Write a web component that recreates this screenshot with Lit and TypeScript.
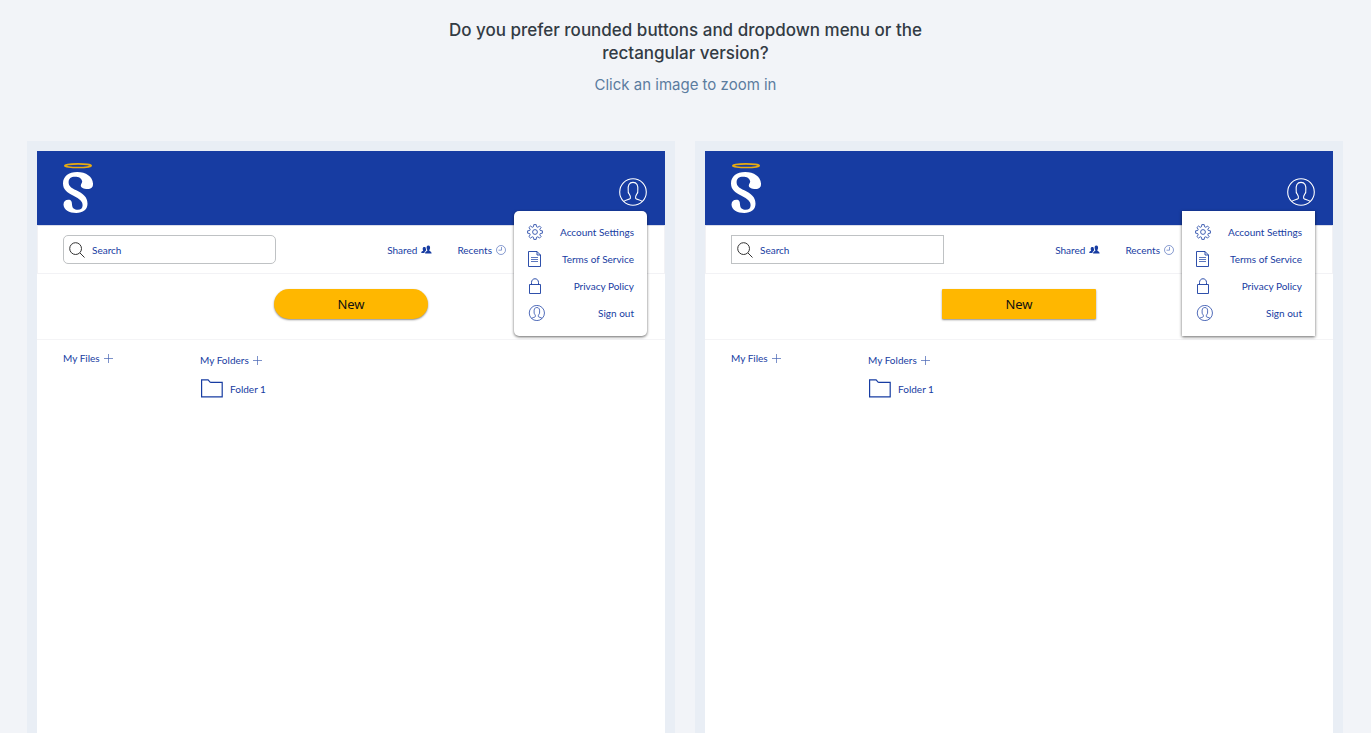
import { LitElement, html, css, svg } from "lit";
import { customElement, property } from "lit/decorators.js";

const person = svg`
  <circle cx="14" cy="14" r="13.3"></circle>
  <path d="M4.8 23.4C6.5 21.8 10.8 21.6 11.4 20.2C11.8 18.6 11.2 17.6 10.4 16.4C9.2 15.4 9 13.6 9.2 12.2C8.8 7.6 10 4.4 14 4.4S19.2 7.6 18.8 12.2C19 13.6 18.8 15.4 17.6 16.4C16.8 17.6 16.2 18.6 16.6 20.2C17.2 21.6 21.5 21.8 23.2 23.4"></path>`;

@customElement("file-mockup")
export class FileMockup extends LitElement {
  @property({ reflect: true }) shape: "rounded" | "square" = "rounded";

  static styles = css`
    :host {
      --blue: #173ca2;
      --radius-small: 0;
      --radius-button: 1px;
      --radius-menu: 0;
      display: block;
      position: relative;
      background: #fff;
      color: var(--blue);
      font: 10px/16px Lato, "Open Sans", sans-serif;
    }
    :host([shape="rounded"]) {
      --radius-small: 5px;
      --radius-button: 15px;
      --radius-menu: 5px;
    }
    svg {
      display: block;
      flex: none;
      fill: none;
      stroke: currentColor;
    }
    a {
      color: inherit;
      text-decoration: none;
    }
    button {
      border: 0;
      padding: 0;
      background: none;
      color: inherit;
      font: inherit;
      cursor: pointer;
    }
    .header {
      display: flex;
      justify-content: space-between;
      align-items: center;
      height: 74px;
      box-sizing: border-box;
      padding: 8px 18px 0 25px;
      background: var(--blue);
      color: #fff;
    }
    .logo {
      margin-top: -8px;
    }
    .toolbar {
      display: flex;
      align-items: center;
      justify-content: space-between;
      padding: 9px 158px 9px 25px;
      border: 1px solid #f2f2f5;
      border-top-color: #d9dcea;
    }
    .search {
      display: flex;
      align-items: center;
      gap: 7px;
      width: 48%;
      height: 29px;
      box-sizing: border-box;
      padding: 0 6px 0 5px;
      border: 1px solid #bfc2c4;
      border-radius: var(--radius-small);
    }
    .search svg {
      color: #333;
    }
    .search input {
      flex: 1;
      min-width: 0;
      border: 0;
      padding: 0;
      outline: 0;
      background: none;
      color: inherit;
      font: inherit;
    }
    .search input::placeholder {
      color: var(--blue);
      opacity: 1;
    }
    .links {
      display: flex;
      gap: 25px;
    }
    .links a {
      display: flex;
      align-items: center;
      gap: 4px;
    }
    .action {
      display: flex;
      justify-content: center;
      padding: 15px 0 20px;
      border-bottom: 1px solid #f4f4f6;
    }
    .new {
      width: 154px;
      height: 30px;
      border-radius: var(--radius-button);
      background: #ffb700;
      box-shadow: 0 1px 2px rgba(0, 0, 0, 0.45);
      color: #111;
      font: 13px/30px "Noto Sans", sans-serif;
    }
    .content {
      display: grid;
      grid-template-columns: 137px 1fr;
      padding: 10px 26px;
    }
    .title {
      display: flex;
      align-items: center;
      gap: 4px;
    }
    .title svg {
      opacity: 0.8;
    }
    .folders {
      display: grid;
      gap: 11px;
      padding-top: 2px;
      justify-items: start;
    }
    .folder {
      display: flex;
      align-items: center;
      gap: 7px;
    }
    .menu {
      position: absolute;
      top: 60px;
      right: 18px;
      box-sizing: border-box;
      width: 133px;
      margin: 0;
      padding: 7px 13px 10px;
      list-style: none;
      border-radius: var(--radius-menu);
      background: #fff;
      box-shadow: 0 1px 3px rgba(0, 0, 0, 0.6);
    }
    .menu a {
      display: flex;
      align-items: center;
      justify-content: space-between;
      height: 27px;
    }
  `;

  render() {
    return html`
      <header class="header">
        <svg class="logo" width="32" height="52" viewBox="0 0 32 52" role="img" aria-label="Home">
          <ellipse cx="16" cy="3.7" rx="13.2" ry="1.8" stroke="#e8ab12" stroke-width="1.7"></ellipse>
          <path fill="#fff" stroke="none" d="M15.2 10C6.500 10 1 14.600 1 21.200C1 27.600 4.800 30.200 11.500 33.800C17.800 37.200 20.600 39.400 20.600 43.200C20.600 46.200 18.800 47.800 15.800 47.800C12.400 47.800 10.200 46.600 10 42.600C9.900 39.600 9.300 37.800 6.400 37.800C3.400 37.800 1.500 39.600 1.500 42.500C1.500 47.600 7.200 51 14.200 51C21 51 25.500 47.600 25.500 41.800C25.500 35 21 31.600 14.300 28.300C9 25.700 6.600 24 6.600 20.200C6.600 16.500 9 14.700 13 14.700C16.800 14.700 19.500 16 20.200 19.500C20.200 21 18.800 22.200 18.800 23.500C18.800 25.800 21.500 27 25.600 27C29 27 31.200 25.700 31 21.500C30.600 14.500 24 10 15.200 10Z"></path>
        </svg>
        <button type="button" aria-label="Account">
          <svg width="28" height="28" viewBox="0 0 28 28" stroke-width="1.1">${person}</svg>
        </button>
      </header>
      <div class="toolbar">
        <label class="search">
          <svg width="16" height="16" viewBox="0 0 16 16" stroke-width="1">
            <circle cx="6.600" cy="6.600" r="5.900"></circle>
            <path d="M11 11L15.500 15.500"></path>
          </svg>
          <input type="search" placeholder="Search" aria-label="Search" />
        </label>
        <nav class="links">
          <a href="#shared">Shared
            <svg width="11" height="10" viewBox="0 0 11 10">
              <path fill="currentColor" stroke="none" d="M7.300 .5C9 .5 9.300 2 9 3.500C8.700 4.600 8.300 5 8.300 5.500C8.500 6.200 10.600 6.200 10.600 8.600H4.100C4.100 6.200 6.200 6.200 6.400 5.500C6.400 5 5.900 4.600 5.700 3.500C5.400 2 5.700 .5 7.300 .5ZM3.300 2C4.300 1.800 4.800 2.500 4.800 3.600C4.900 4.600 5.300 4.800 5 5.400C4.300 5.900 3.500 6.600 3.400 8H.2C.2 6.200 2 6.200 2.200 5.600C2 5 1.600 4.500 1.700 3.500C1.700 2.600 2.300 2 3.300 2Z"></path>
            </svg>
          </a>
          <a href="#recents">Recents
            <svg width="10" height="10" viewBox="0 0 10 10" stroke-width=".5">
              <circle cx="5" cy="5" r="4.500"></circle>
              <path d="M5.500 2V5.200H2.500"></path>
            </svg>
          </a>
        </nav>
      </div>
      <div class="action"><button class="new" type="button">New</button></div>
      <div class="content">
        <section>
          <button class="title" type="button">My Files ${this.plus()}</button>
        </section>
        <section class="folders">
          <button class="title" type="button">My Folders ${this.plus()}</button>
          <a class="folder" href="#folder-1">
            <svg width="23" height="19" viewBox="0 0 23 19" stroke-width="1.200">
              <path d="M1.600 .8H7.800C9.200 .8 9 3.300 10.800 3.300H22.200V17.800H1.600Z"></path>
            </svg>
            Folder 1
          </a>
        </section>
      </div>
      <ul class="menu">
        <li><a href="#settings">
          <svg width="16" height="16" viewBox="0 0 16 16" stroke-width=".8">
            <circle cx="8" cy="8" r="2.400"></circle>
            <path d="M6.800 .6H9.200L9.500 2.700L10.900 3.300L12.500 2L14.100 3.600L12.800 5.200L13.300 6.500L15.400 6.800V9.200L13.300 9.500L12.800 10.900L14.100 12.500L12.500 14.100L10.900 12.800L9.500 13.300L9.200 15.400H6.800L6.500 13.300L5.200 12.800L3.600 14.100L1.900 12.500L3.200 10.900L2.700 9.500L.6 9.200V6.800L2.700 6.500L3.200 5.200L1.900 3.600L3.600 2L5.200 3.300L6.500 2.700Z"></path>
          </svg>Account Settings</a></li>
        <li><a href="#terms">
          <svg width="15" height="16" viewBox="0 0 15 16" stroke-width=".9">
            <path d="M1.500 .5H10L13.500 4V15.500H1.500ZM10 .5V4H13.500"></path>
            <path stroke-width=".7" d="M4 6.500H11M4 8.500H11M4 10.500H11"></path>
          </svg>Terms of Service</a></li>
        <li><a href="#privacy">
          <svg width="15" height="16" viewBox="0 0 15 16" stroke-width=".9">
            <path d="M2.500 6.500H13.500V15.500H2.500ZM4.500 6.500V4.500C4.500 -.5 11.500 -.5 11.500 4.500V6.500"></path>
          </svg>Privacy Policy</a></li>
        <li><a href="#sign-out">
          <svg width="18" height="16" viewBox="-3 0 31 28" stroke-width="1.300">${person}</svg>Sign out</a></li>
      </ul>
    `;
  }

  private plus() {
    return html`<svg width="9" height="9" viewBox="0 0 9 9" stroke-width=".7"><path d="M4.500 0V9M0 4.500H9"></path></svg>`;
  }
}

@customElement("app-root")
export class AppRoot extends LitElement {
  static styles = css`
    :host {
      display: flex;
      flex-direction: column;
      min-height: 100vh;
      background: #f2f4f8;
      font-family: Inter, "Liberation Sans", sans-serif;
      text-align: center;
    }
    .question {
      max-width: 500px;
      margin: 19px auto 0;
      color: #333b44;
      font-size: 17px;
      line-height: 23px;
      font-weight: 500;
    }
    .hint {
      margin: 8px 0 44px;
      color: #5c7c9f;
      font-size: 15px;
      line-height: 24px;
    }
    .options {
      flex: 1;
      display: grid;
      grid-template-columns: 1fr 1fr;
      gap: 20px;
      padding: 0 28px 0 27px;
      text-align: left;
    }
    .option {
      display: grid;
      padding: 10px 10px 0;
      background: #e9eef5;
    }
  `;

  render() {
    return html`
      <h1 class="question">Do you prefer rounded buttons and dropdown menu or the rectangular version?</h1>
      <p class="hint">Click an image to zoom in</p>
      <main class="options">
        <div class="option"><file-mockup shape="rounded"></file-mockup></div>
        <div class="option"><file-mockup shape="square"></file-mockup></div>
      </main>
    `;
  }
}
